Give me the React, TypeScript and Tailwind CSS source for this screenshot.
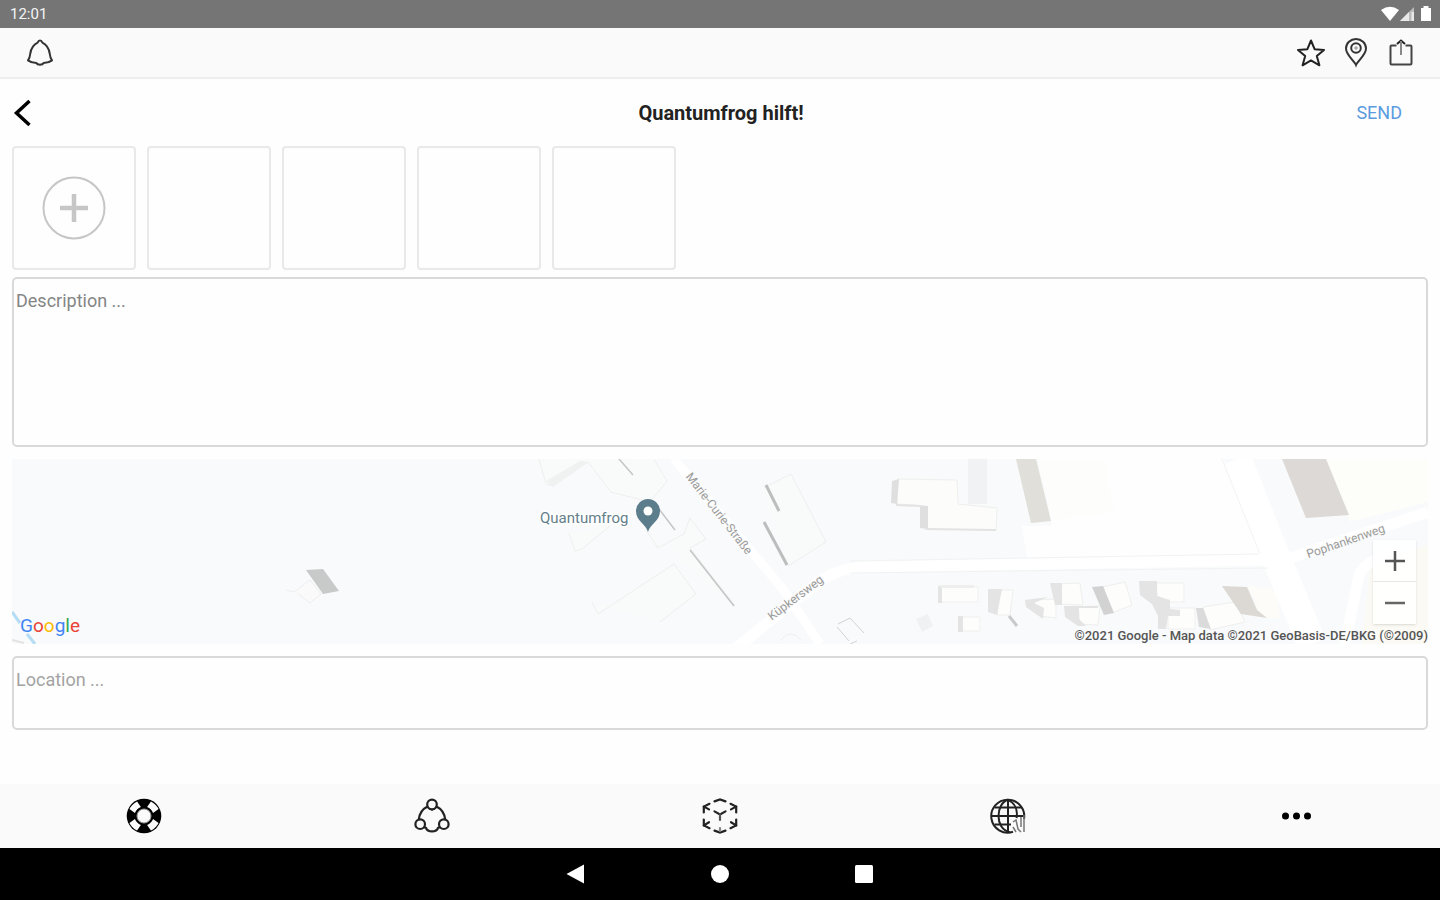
import React from "react";

const BellIcon = () => (
  <svg viewBox="0 0 28 28" className="size-7" fill="none" stroke="#333" strokeWidth="2" strokeLinejoin="round">
    <path d="M14 1.6 C12.6 1.6 12 2.6 11.6 3.6 C7.5 5.6 5 9.6 4.3 14.5 C4 17.5 3.4 19.4 2 21.4 C4.5 23.4 7.5 23.9 10.4 24 C11.5 26.3 16.5 26.3 17.6 24 C20.5 23.9 23.5 23.4 26 21.4 C24.6 19.4 24 17.5 23.7 14.5 C23 9.6 20.5 5.6 16.4 3.6 C16 2.6 15.4 1.6 14 1.6 Z" />
  </svg>
);

const StarIcon = () => (
  <svg viewBox="0 0 30 30" className="size-[30px]" fill="none" stroke="#222" strokeWidth="2" strokeLinejoin="round">
    <path d="M15 2.5 L18.6 11.2 L28 11.9 L20.8 18 L23.4 27.3 L15 22.4 L6.6 27.3 L9.2 18 L2 11.9 L11.4 11.2 Z" />
  </svg>
);

const PinIcon = () => (
  <svg viewBox="0 0 30 30" className="size-[30px]" fill="none" stroke="#333" strokeWidth="2">
    <path d="M15 27 C13.5 23 5 17 5 10.5 A10 9.5 0 0 1 25 10.5 C25 17 16.5 23 15 27 Z" />
    <circle cx="15" cy="10" r="4.8" />
    <circle cx="15" cy="10" r="1.2" stroke="#888" strokeWidth="1" />
  </svg>
);

const ShareIcon = () => (
  <svg viewBox="0 0 30 30" className="size-[30px]" fill="none" stroke="#444" strokeWidth="2">
    <path d="M10.5 7.5 H5.5 Q4.5 7.5 4.5 8.5 V25.500 Q4.5 26.500 5.5 26.500 H24.5 Q25.5 26.500 25.5 25.500 V8.5 Q25.5 7.5 24.5 7.5 H19.5" />
    <path d="M11 6 L15 2.5 L19 6" stroke="#222" />
    <path d="M15 3 V17" stroke="#888" />
  </svg>
);

const LifebuoyIcon = () => (
  <svg viewBox="0 0 36 36" className="size-9">
    <circle cx="18" cy="18" r="17.3" fill="#000" />
    <g fill="#fafafa">
      <path d="M12.600 2.800 Q18 1 23.400 2.800 L22.200 9.400 Q18 7.600 13.800 9.400 Z" transform="rotate(45 18 18)" />
      <path d="M12.600 2.800 Q18 1 23.400 2.800 L22.200 9.400 Q18 7.600 13.800 9.400 Z" transform="rotate(135 18 18)" />
      <path d="M12.600 2.800 Q18 1 23.400 2.800 L22.200 9.400 Q18 7.600 13.800 9.400 Z" transform="rotate(225 18 18)" />
      <path d="M12.600 2.800 Q18 1 23.400 2.800 L22.200 9.400 Q18 7.600 13.800 9.400 Z" transform="rotate(315 18 18)" />
    </g>
    <circle cx="18" cy="18" r="7" fill="#fafafa" stroke="#999" strokeWidth="1" />
  </svg>
);

const CommunityIcon = () => (
  <svg viewBox="0 0 36 36" className="size-9" fill="none" stroke="#222" strokeWidth="2.200">
    <circle cx="18" cy="6.5" r="4.8" />
    <circle cx="6.2" cy="26.2" r="4.8" />
    <circle cx="29.8" cy="26.2" r="4.8" />
    <path d="M13.5 8.5 C8.5 11 5.5 15.5 4.8 21.4" />
    <path d="M22.5 8.5 C27.5 11 30.5 15.5 31.2 21.4" />
    <path d="M9.8 29.2 L12 29.8 C13.5 34.6 22.5 34.6 24 29.8 L26.2 29.2" />
    <path d="M14.5 10.5 L18 12.3 L21.5 10.5" strokeWidth="1" />
  </svg>
);

const CubeIcon = () => (
  <svg viewBox="0 0 36 36" className="size-9" fill="none" stroke="#222" strokeWidth="2.200" strokeLinecap="round">
    <path d="M12.500 3.4 L18 1.5 L23.500 3.4" />
    <path d="M7.5 5.8 L1.8 8.6 V14.5" />
    <path d="M28.5 5.8 L34.2 8.6 V14.5" />
    <path d="M1.8 21.5 V27.4 L7.5 30.2" />
    <path d="M34.2 21.5 V27.4 L28.5 30.2" />
    <path d="M12.500 32.6 L18 34.5 L23.500 32.6" />
    <path d="M1.8 8.6 L7 11.4" />
    <path d="M34.2 8.6 L29 11.4" />
    <path d="M1.8 27.4 L7 24.2" />
    <path d="M34.2 27.4 L29 24.2" />
    <path d="M12.500 13.4 L18 16.4 L23.500 13.4" />
    <path d="M18 16.4 V22" stroke="#555" />
    <path d="M18 30 V33" stroke="#888" />
  </svg>
);

const GlobeIcon = () => (
  <svg viewBox="0 0 36 36" className="size-9" fill="none" stroke="#222" strokeWidth="2">
    <path d="M23 33.8 A16.5 16.5 0 1 1 34 21" />
    <path d="M20 34.2 C4 31 6 5 18 1.8 C25 5 28 12 26.5 20" />
    <path d="M18 2 V34" />
    <path d="M4.5 9.500 H31.5 M1.5 18 H34.5 M4.5 26.500 H21" />
    <path d="M31 19 V29 M34 17 V34" stroke="#777" strokeWidth="1.5" />
    <path d="M23 24 L26 22 L28 31 L31 34 M23 29 L26 34" stroke="#777" strokeWidth="1.5" />
  </svg>
);

const MoreIcon = () => (
  <svg viewBox="0 0 36 36" className="size-9">
    <circle cx="7.5" cy="18" r="3.5" />
    <circle cx="18.5" cy="18" r="3.5" />
    <circle cx="29.5" cy="18" r="3.5" />
  </svg>
);

const tabs = [
  { label: "Help", icon: <LifebuoyIcon /> },
  { label: "Community", icon: <CommunityIcon /> },
  { label: "Cube", icon: <CubeIcon /> },
  { label: "Web", icon: <GlobeIcon /> },
  { label: "More", icon: <MoreIcon /> },
];

const StatusBar = () => (
  <div className="flex h-7 items-center justify-between bg-[#757575] pl-2.5 pr-2 text-[15px] text-gray-100">
    <span>12:01</span>
    <svg viewBox="0 0 52 18" className="h-[18px] w-[52px]" fill="#fff">
      <path d="M1 5 Q10 -1.5 19 5 L10 16 Z" />
      <path d="M20 16 L34 2 V16 Z" fill="#bbb" />
      <path d="M20 16 L29 7 V16 Z M31.500 7 H34 V16 H31.500 Z" fill="#e8e8e8" />
      <path d="M43.500 1 H48.500 V3 H51 V16 H41 V3 H43.500 Z" />
    </svg>
  </div>
);

const MapDrawing = () => (
  <svg
    viewBox="12 459 1416 185"
    preserveAspectRatio="xMidYMid slice"
    className="block h-full w-full"
    fontFamily="Roboto, sans-serif"
  >
    <rect x="12" y="459" width="1416" height="185" fill="#f8fafb" />

    {/* Open ground and fields */}
    <path d="M1040 459 H1224 L1262 556 L1027 558 L1022 526 H1052 Z" fill="#fefefe" />
    <path d="M1037 459 H1105 L1114 512 L1053 520 Z" fill="#fdfdfb" />
    <path d="M1324 459 H1428 V502 L1350 522 Z" fill="#fdfdf9" />
    <path d="M1371 562 L1428 545 V644 H1362 Z" fill="#fbfaf4" />
    <path d="M1248 585 L1277 590 L1280 618 L1262 618 Z" fill="#fdfcf8" />

    {/* Streets */}
    <g fill="none" stroke="#fff" strokeLinejoin="round">
      <path d="M674 459 L782 588 L820 644" strokeWidth="9" />
      <path d="M736 648 L815 585 Q835 568 865 567 L1270 560" strokeWidth="11" />
      <path d="M1237 459 L1273 550 L1312 644" strokeWidth="29" />
      <path d="M1290 558 L1428 512" strokeWidth="11" />
      <path d="M1345 644 L1358 580 Q1360 560 1400 553" strokeWidth="11" />
    </g>
    <g fill="none" stroke="#f1f2f3" strokeWidth="1">
      <path d="M850 561 L1258 554" />
      <path d="M1222 459 L1260 554" />
      <path d="M850 573 L1268 568" />
    </g>

    {/* Halls left of the main street */}
    <g fill="#f9fafa" stroke="#eeefef" strokeWidth="1">
      <path d="M539 459 L546 484 L553 486 L588 462 L611 492 L650 502 L667 481 L654 459" />
      <path d="M569 533 L575 551 L582 549 L610 526" />
      <path d="M646 530 L658 548 L684 534 L690 518 L706 539 L690 548 L735 606" />
      <path d="M592 602 L598 614 L674 564 L696 594 L660 622" />
      <path d="M764 488 L791 474 L826 542 L788 566" />
    </g>
    <path d="M546 481 L580 461 L588 462 L553 487 Z" fill="#f0f1f1" />
    <g stroke="#c4c5c5" strokeWidth="1.500">
      <path d="M619 459 L633 475" />
      <path d="M656 505 L675 530" />
      <path d="M690 550 L734 606" />
    </g>
    <g stroke="#bcbdbd" strokeWidth="3">
      <path d="M766 485 L779 511" />
      <path d="M764 522 L787 565" />
    </g>
    <path d="M837 627 L849 641 M850 644 L857 641 M838 624 L850 618 L864 633" stroke="#d2d3d3" fill="none" />
    <path d="M781 640 Q790 628 801 640" stroke="#eee" fill="none" />

    {/* Lone house */}
    <path d="M286 590 L294 592 L310 580 L321 594 L310 603 L297 593" fill="#fafafa" stroke="#eeeeee" />
    <path d="M306 570 L323 569 L339 591 L323 594 Z" fill="#c8c9c9" />

    {/* L-shaped building */}
    <path d="M968 459 H987 V504 H968 Z" fill="#f1f2f4" />
    <path d="M898 479 L957 480 L958 504 L997 508 L996 530 L924 529 L927 506 L897 504 Z" fill="#fcfcfb" stroke="#efefee" />
    <path d="M892 481 L899 479 L897 504 L891 503 Z M920 506 L928 506 L928 529 L920 528 Z" fill="#dfdfdf" />
    <path d="M896 505 L922 506 M926 529 L996 530" stroke="#e3e3e3" strokeWidth="2" />

    {/* Big shadows */}
    <path d="M1016 459 H1036 L1051 521 L1031 523 Z" fill="#e1dfda" />
    <path d="M1282 459 H1326 L1349 515 L1306 518 Z" fill="#dcd9d6" />

    {/* Row of houses */}
    <g fill="#fdfdfc" stroke="#efefee">
      <path d="M941 587 H978 V602 H941 Z" />
      <path d="M998 590 L1013 590 L1010 615 L997 615 Z" />
      <path d="M1033 600 L1056 599 L1056 618 L1040 616 Z" />
      <path d="M1058 584 L1080 583 L1083 605 L1060 604 Z" />
      <path d="M1078 607 L1100 606 L1098 625 L1080 624 Z" />
      <path d="M1103 587 L1125 582 L1132 605 L1112 613 Z" />
      <path d="M1156 583 H1184 V602 H1170 L1157 596 Z" />
      <path d="M1168 608 H1195 V629 H1168 Z" />
      <path d="M1203 607 L1235 602 L1245 622 L1210 630 Z" />
      <path d="M962 617 H980 V631 H962 Z" />
    </g>
    <g fill="#e4e4e4">
      <path d="M938 586 H942 V603 H938 Z" />
      <path d="M938 585 H974 V588 H941 Z" fill="#eeeeee" />
      <path d="M988 589 H1002 L997 615 L988 612 Z" />
      <path d="M1025 600 L1048 597 L1034 603 L1044 608 L1043 619 L1026 607 Z" />
      <path d="M1050 583 H1062 V605 H1055 Z" />
      <path d="M1064 606 H1098 V608 H1079 V619 L1086 626 H1078 L1065 617 Z" />
      <path d="M958 616 H963 V632 H958 Z" />
      <path d="M916 619 L928 614 L933 626 L922 632 Z" fill="#f0f1f2" />
      <path d="M1139 581 H1157 V596 L1170 600 V609 L1180 610 V616 L1168 616 L1166 629 H1158 V616 L1152 604 L1140 595 Z" />
    </g>
    <path d="M1092 587 L1103 586 L1114 613 L1104 615 Z" fill="#d2d2d3" />
    <path d="M1009 616 L1017 626" stroke="#c9caca" strokeWidth="3" />
    <path d="M1196 608 L1203 608 L1211 629 L1199 627 Z" fill="#dbdbdb" />
    <path d="M1222 586 L1247 587 L1257 610 L1267 618 L1241 614 Z" fill="#dcd8d4" />

    {/* Stream in the corner */}
    <g stroke="#b5dcf5" strokeWidth="3" fill="none">
      <path d="M12 612 L20 623" />
      <path d="M27 634 L35 644" />
    </g>
    <path d="M12 640 L24 643" stroke="#e3e3e3" strokeWidth="2" />

    {/* Street names */}
    <g fill="#9a9a9a" stroke="#fafbfb" strokeWidth="2" paintOrder="stroke" fontSize="12" textAnchor="middle">
      <text transform="translate(716 516) rotate(52)">Marie-Curie-Straße</text>
      <text transform="translate(798 601) rotate(-37)">Küpkersweg</text>
      <text transform="translate(1347 545) rotate(-19)">Pophankenweg</text>
    </g>

    {/* Place marker */}
    <text x="540" y="523" fontSize="15" fill="#64808b" stroke="#fff" strokeWidth="3" paintOrder="stroke">
      Quantumfrog
    </text>
    <path d="M648 532 C646 524 636 521 636 511 A12 12 0 0 1 660 511 C660 521 650 524 648 532 Z" fill="#5b7d8c" />
    <circle cx="648" cy="511" r="4.500" fill="#fff" />
  </svg>
);

const MapView = () => (
  <section aria-label="Map" className="relative h-[185px] overflow-hidden">
    <MapDrawing />
    <div className="absolute bottom-1.5 left-2 text-[19px] leading-6">
      <span className="text-[#4285f4]">G</span>
      <span className="text-[#ea4335]">o</span>
      <span className="text-[#fbbc05]">o</span>
      <span className="text-[#4285f4]">g</span>
      <span className="text-[#34a853]">l</span>
      <span className="text-[#ea4335]">e</span>
    </div>
    <div className="absolute bottom-5 right-3 flex w-[43px] flex-col divide-y divide-gray-200 bg-white/90 shadow-sm">
      <button aria-label="Zoom in" className="flex h-[42px] items-center justify-center">
        <svg viewBox="0 0 20 20" className="size-5" stroke="#555" strokeWidth="2.500">
          <path d="M0 10 H20 M10 0 V20" />
        </svg>
      </button>
      <button aria-label="Zoom out" className="flex h-[42px] items-center justify-center">
        <svg viewBox="0 0 20 20" className="size-5" stroke="#666" strokeWidth="2.500">
          <path d="M0 10 H20" />
        </svg>
      </button>
    </div>
    <p className="absolute bottom-0 right-0 text-[13px] font-medium leading-4 text-[#555]">
      ©2021 Google - Map data ©2021 GeoBasis-DE/BKG (©2009)
    </p>
  </section>
);

const App = () => {
  return (
    <div className="flex min-h-screen flex-col bg-[#fefefe] font-[Roboto,sans-serif]">
      <StatusBar />

      {/* Toolbar */}
      <div className="flex h-[51px] items-center justify-between border-b-2 border-[#eeeeee] bg-[#fafafa] px-6">
        <button aria-label="Notifications" className="px-0.5">
          <BellIcon />
        </button>
        <div className="flex gap-[15px]">
          <button aria-label="Favourites"><StarIcon /></button>
          <button aria-label="Places"><PinIcon /></button>
          <button aria-label="Share"><ShareIcon /></button>
        </div>
      </div>

      {/* Title row */}
      <header className="grid h-[67px] grid-cols-3 items-center pl-3 pr-[38px]">
        <button aria-label="Back" className="justify-self-start">
          <svg viewBox="0 0 20 28" className="h-7 w-5" fill="none" stroke="#000" strokeWidth="3.500">
            <path d="M17.500 2 L4.500 14 L17.500 26" />
          </svg>
        </button>
        <h1 className="pl-7 text-center text-[20px] font-bold text-[#222]">Quantumfrog hilft!</h1>
        <button className="justify-self-end text-[18px] text-[#5b9be0]">SEND</button>
      </header>

      {/* Form */}
      <main className="flex flex-1 flex-col px-3">
        <div className="mb-[7px] flex gap-[11px]">
          {[0, 1, 2, 3, 4].map((slot) => (
            <button
              key={slot}
              aria-label={slot === 0 ? "Add photo" : "Empty photo slot"}
              className="flex size-[124px] items-center justify-center rounded-sm border-2 border-[#e9e9e9]"
            >
              {slot === 0 && (
                <svg viewBox="0 0 64 64" className="size-16" fill="none" stroke="#c6c6c6">
                  <circle cx="32" cy="32" r="30.500" strokeWidth="2" />
                  <path d="M18 32 H46 M32 18 V46" strokeWidth="4.500" />
                </svg>
              )}
            </button>
          ))}
        </div>
        <textarea
          aria-label="Description"
          placeholder="Description ..."
          className="mb-3 block h-[170px] resize-none rounded-[5px] border-2 border-[#d9d9d9] px-0.5 py-2.5 text-[18px] leading-6 placeholder:text-[#858585]"
        />
        <MapView />
        <textarea
          aria-label="Location"
          placeholder="Location ..."
          className="mt-3 block h-[74px] resize-none rounded-[5px] border-2 border-[#d9d9d9] px-0.5 py-2.5 text-[18px] leading-6 placeholder:text-[#a3a3a3]"
        />
      </main>

      {/* Tabs */}
      <nav className="grid h-16 grid-cols-5 bg-[#fafafa]">
        {tabs.map((tab) => (
          <button key={tab.label} aria-label={tab.label} className="flex items-center justify-center">
            {tab.icon}
          </button>
        ))}
      </nav>

      {/* System navigation */}
      <div className="flex h-[52px] items-center justify-center gap-[124px] bg-black">
        <button aria-label="System back">
          <svg viewBox="0 0 20 20" className="size-5" fill="#fff"><path d="M0.500 10 L18 0.500 V19.500 Z" /></svg>
        </button>
        <button aria-label="System home">
          <svg viewBox="0 0 20 20" className="size-5" fill="#fff"><circle cx="10" cy="10" r="9" /></svg>
        </button>
        <button aria-label="System overview">
          <svg viewBox="0 0 20 20" className="size-5" fill="#fff"><rect x="1" y="1" width="18" height="18" rx="1.500" /></svg>
        </button>
      </div>
    </div>
  );
};

export default App;
